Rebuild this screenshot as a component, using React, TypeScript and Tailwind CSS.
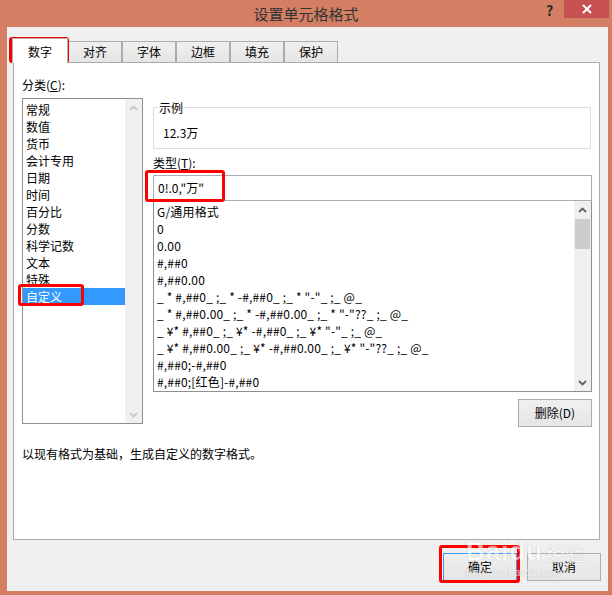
import React from 'react';

const categories = ['常规', '数值', '货币', '会计专用', '日期', '时间', '百分比', '分数', '科学记数', '文本', '特殊', '自定义'];

const formats = [
  'G/通用格式',
  '0',
  '0.00',
  '#,##0',
  '#,##0.00',
  '_ * #,##0_ ;_ * -#,##0_ ;_ * "-"_ ;_ @_',
  '_ * #,##0.00_ ;_ * -#,##0.00_ ;_ * "-"??_ ;_ @_',
  '_ ¥* #,##0_ ;_ ¥* -#,##0_ ;_ ¥* "-"_ ;_ @_',
  '_ ¥* #,##0.00_ ;_ ¥* -#,##0.00_ ;_ ¥* "-"??_ ;_ @_',
  '#,##0;-#,##0',
  '#,##0;[红色]-#,##0',
];

const tabs = ['对齐', '字体', '边框', '填充', '保护'];

const Chevron: React.FC<{ up?: boolean; color: string }> = ({ up = false, color }) => (
  <svg width="9" height="6" viewBox="0 0 9 6">
    <path d={up ? 'M1 5 L4.5 1.5 L8 5' : 'M1 1 L4.5 4.5 L8 1'} fill="none" stroke={color} strokeWidth="1.8" />
  </svg>
);

const Button: React.FC<{ label: string; primary?: boolean }> = ({ label, primary = false }) => (
  <div
    className={`w-[74px] h-[28px] flex items-center justify-center border bg-gradient-to-b from-[#f0f0f0] to-[#e5e5e5] ${
      primary ? 'border-[#3399ff]' : 'border-[#adadad]'
    }`}
  >
    {label}
  </div>
);

const RedBox: React.FC<{ className: string }> = ({ className }) => (
  <div className={`absolute border-[3px] border-[#ff0000] rounded-[3px] pointer-events-none ${className}`} />
);

export default function App() {
  return (
    <div className="relative w-[612px] h-[595px] overflow-hidden bg-[#d47e63] flex flex-col font-['Noto_Sans_CJK_SC',sans-serif] text-[12px] text-black">
      {/* title bar */}
      <div className="h-[27px] shrink-0 flex items-start">
        <div className="w-[67px]" />
        <div className="flex-1 text-center text-[15px] leading-[27px] text-[#333]">设置单元格格式</div>
        <div className="w-[67px] flex items-start">
          <div className="w-[19px] h-[18px] pl-[1px] text-[14px] font-bold leading-[20px] text-[#2b2b2b]">?</div>
          <div className="w-[45px] h-[18px] bg-[#c75050] flex items-center justify-center">
            <svg width="10" height="10" viewBox="0 0 10 10">
              <path d="M1 1 L9 9 M9 1 L1 9" stroke="#fff" strokeWidth="2" />
            </svg>
          </div>
        </div>
      </div>

      {/* client area */}
      <div className="ml-[7px] w-[601px] h-[564px] bg-[#f0f0f0] flex flex-col">
        {/* tabs */}
        <div className="h-[35px] shrink-0 flex items-end pl-[5px]">
          <div className="relative z-10 -mb-px w-[56px] h-[25px] bg-white border border-b-0 border-[#acacac] flex items-center justify-center pt-[2px]">
            数字
          </div>
          {tabs.map((t) => (
            <div
              key={t}
              className="w-[54px] h-[21px] border border-b-0 border-[#acacac] bg-gradient-to-b from-[#f0f0f0] to-[#e5e5e5] flex items-center justify-center"
            >
              {t}
            </div>
          ))}
        </div>

        {/* tab panel */}
        <div className="ml-[6px] w-[587px] h-[478px] bg-white border border-[#acacac] flex flex-col pl-[8px] pt-[13px]">
          <div className="flex items-start">
            {/* category column */}
            <div className="w-[121px] flex flex-col">
              <div className="leading-[17px] h-[17px]">分类(<span className="underline">C</span>):</div>
              <div className="mt-[5px] h-[326px] border border-[#8e8f8f] flex">
                <div className="flex-1 pt-[2px] flex flex-col">
                  {categories.map((c) => (
                    <div
                      key={c}
                      className={`leading-[17px] h-[17px] pl-[3px] ${c === '自定义' ? 'bg-[#3399ff] text-white' : ''}`}
                    >
                      {c}
                    </div>
                  ))}
                </div>
                <div className="w-[17px] bg-[#f0f0f0] flex flex-col justify-between">
                  <div className="h-[17px] flex items-center justify-center">
                    <Chevron up color="#c8c8c8" />
                  </div>
                  <div className="h-[17px] flex items-center justify-center">
                    <Chevron color="#c8c8c8" />
                  </div>
                </div>
              </div>
            </div>

            {/* right column */}
            <div className="ml-[10px] w-[439px] flex flex-col">
              <div className="mt-[31px] relative w-[438px] h-[42px] border border-[#dcdcdc]">
                <div className="absolute left-[4px] -top-[9px] px-[1px] bg-white leading-[17px]">示例</div>
                <div className="pl-[9px] pt-[16px] leading-[17px]">12.3万</div>
              </div>
              <div className="mt-[5px] leading-[17px] h-[17px]">
                类型(<span className="underline">T</span>):
              </div>
              <div className="mt-[4px] h-[26px] border border-[#abadb3] pl-[4px] leading-[24px] whitespace-pre">0!.0,"万"</div>
              <div className="h-[191px] border border-t-0 border-[#8e8f8f] flex">
                <div className="flex-1 pt-[2px] pl-[3px] flex flex-col whitespace-pre tracking-[0.17px]">
                  {formats.map((f) => (
                    <div key={f} className="leading-[17px] h-[17px]">
                      {f}
                    </div>
                  ))}
                </div>
                <div className="w-[17px] bg-[#f0f0f0] flex flex-col">
                  <div className="h-[17px] flex items-center justify-center">
                    <Chevron up color="#606060" />
                  </div>
                  <div className="mt-[1px] mx-[1px] h-[30px] bg-[#cdcdcd]" />
                  <div className="flex-1" />
                  <div className="h-[17px] flex items-center justify-center">
                    <Chevron color="#606060" />
                  </div>
                </div>
              </div>
              <div className="mt-[7px] self-end">
                <Button label="删除(D)" />
              </div>
            </div>
          </div>

          <div className="mt-[18px] leading-[17px]">以现有格式为基础，生成自定义的数字格式。</div>
        </div>

        {/* bottom buttons */}
        <div className="mt-[13px] flex justify-end gap-[10px] pr-[7px]">
          <Button label="确定" primary />
          <Button label="取消" />
        </div>
      </div>

      {/* annotation boxes */}
      <RedBox className="left-[9px] top-[37px] w-[60px] h-[26px]" />
      <RedBox className="left-[18px] top-[284px] w-[66px] h-[22px]" />
      <RedBox className="left-[145px] top-[170px] w-[80px] h-[32px]" />
      <RedBox className="left-[439px] top-[545px] w-[81px] h-[38px]" />

      {/* watermark */}
      <div className="absolute left-[466px] top-[538px] flex flex-col items-start text-white opacity-60 pointer-events-none [text-shadow:0_0_1px_#8a8a8a]">
        <div className="flex items-end leading-none">
          <span className="font-['Liberation_Sans',sans-serif] text-[26px] font-bold tracking-[1px]">Baidu</span>
          <span className="ml-[2px] text-[20px]">经验</span>
        </div>
        <div className="mt-[3px] font-['Liberation_Sans',sans-serif] text-[11px] leading-none tracking-[0.5px]">jingyan.baidu.com</div>
      </div>
    </div>
  );
}
